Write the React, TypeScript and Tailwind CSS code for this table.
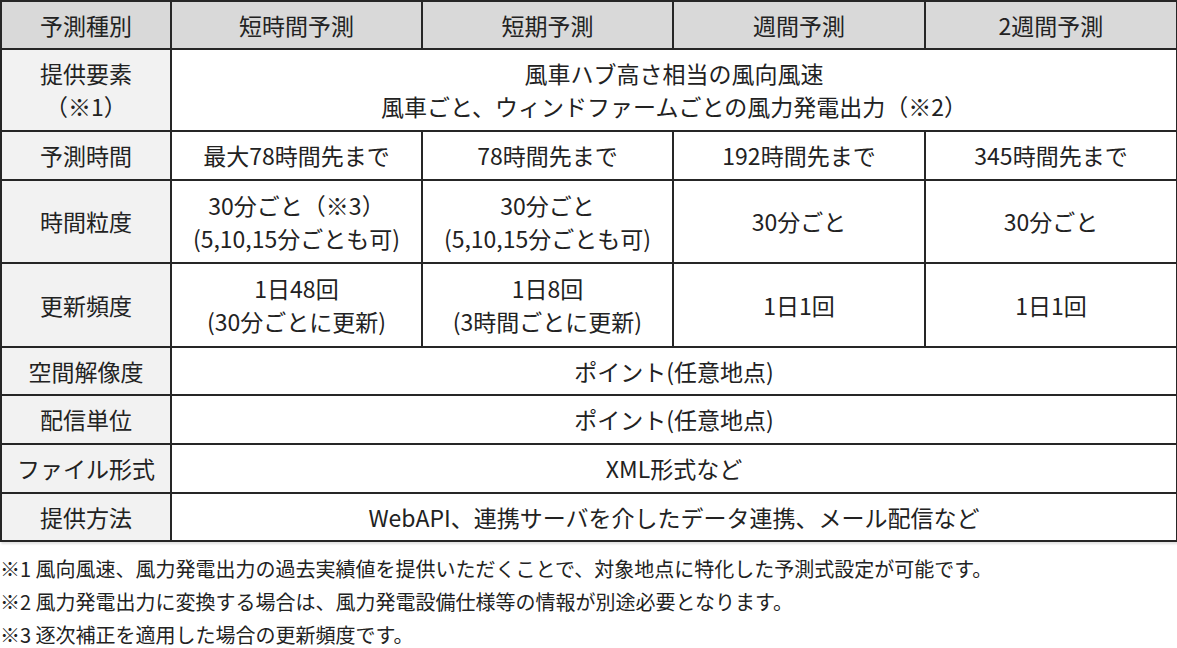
import React from 'react';

const font = { fontFamily: '"Noto Sans CJK JP", "Noto Sans", sans-serif' };

const th = 'border-2 border-[#262626] bg-[#d9d9d9] font-normal text-center align-middle';
const side = 'border-2 border-[#262626] bg-[#f2f2f2] text-center align-middle';
const td = 'border-2 border-[#262626] bg-white text-center align-middle';

const App: React.FC = () => {
  return (
    <div className="w-[1177px] h-[648px] bg-white text-[#222] text-[23px] leading-[33px]" style={font}>
      {/* Spec table */}
      <table className="w-[1176px] table-fixed border-collapse shadow-[1px_2px_2px_rgba(0,0,0,0.12)]">
        <colgroup>
          <col className="w-[170px]" />
          <col className="w-[251px]" />
          <col className="w-[251px]" />
          <col className="w-[252px]" />
          <col className="w-[252px]" />
        </colgroup>
        <tbody>
          <tr className="h-[48px]">
            <th className={th}>予測種別</th>
            <th className={th}>短時間予測</th>
            <th className={th}>短期予測</th>
            <th className={th}>週間予測</th>
            <th className={th}>2週間予測</th>
          </tr>
          <tr className="h-[82px]">
            <td className={side}>
              提供要素
              <br />
              （※1）
            </td>
            <td className={td} colSpan={4}>
              風車ハブ高さ相当の風向風速
              <br />
              風車ごと、ウィンドファームごとの風力発電出力（※2）
            </td>
          </tr>
          <tr className="h-[49px]">
            <td className={side}>予測時間</td>
            <td className={td}>最大78時間先まで</td>
            <td className={td}>78時間先まで</td>
            <td className={td}>192時間先まで</td>
            <td className={td}>345時間先まで</td>
          </tr>
          <tr className="h-[83px]">
            <td className={side}>時間粒度</td>
            <td className={td}>
              30分ごと（※3）
              <br />
              (5,10,15分ごとも可)
            </td>
            <td className={td}>
              30分ごと
              <br />
              (5,10,15分ごとも可)
            </td>
            <td className={td}>30分ごと</td>
            <td className={td}>30分ごと</td>
          </tr>
          <tr className="h-[84px]">
            <td className={side}>更新頻度</td>
            <td className={td}>
              1日48回
              <br />
              (30分ごとに更新)
            </td>
            <td className={td}>
              1日8回
              <br />
              (3時間ごとに更新)
            </td>
            <td className={td}>1日1回</td>
            <td className={td}>1日1回</td>
          </tr>
          <tr className="h-[48px]">
            <td className={side}>空間解像度</td>
            <td className={td} colSpan={4}>ポイント(任意地点)</td>
          </tr>
          <tr className="h-[49px]">
            <td className={side}>配信単位</td>
            <td className={td} colSpan={4}>ポイント(任意地点)</td>
          </tr>
          <tr className="h-[49px]">
            <td className={side}>ファイル形式</td>
            <td className={td} colSpan={4}>XML形式など</td>
          </tr>
          <tr className="h-[48px]">
            <td className={side}>提供方法</td>
            <td className={td} colSpan={4}>WebAPI、連携サーバを介したデータ連携、メール配信など</td>
          </tr>
        </tbody>
      </table>

      {/* Footnotes */}
      <div className="mt-[10px] flex flex-col text-[20px] leading-[33px]">
        <p>※1 風向風速、風力発電出力の過去実績値を提供いただくことで、対象地点に特化した予測式設定が可能です。</p>
        <p>※2 風力発電出力に変換する場合は、風力発電設備仕様等の情報が別途必要となります。</p>
        <p>※3 逐次補正を適用した場合の更新頻度です。</p>
      </div>
    </div>
  );
};

export default App;
